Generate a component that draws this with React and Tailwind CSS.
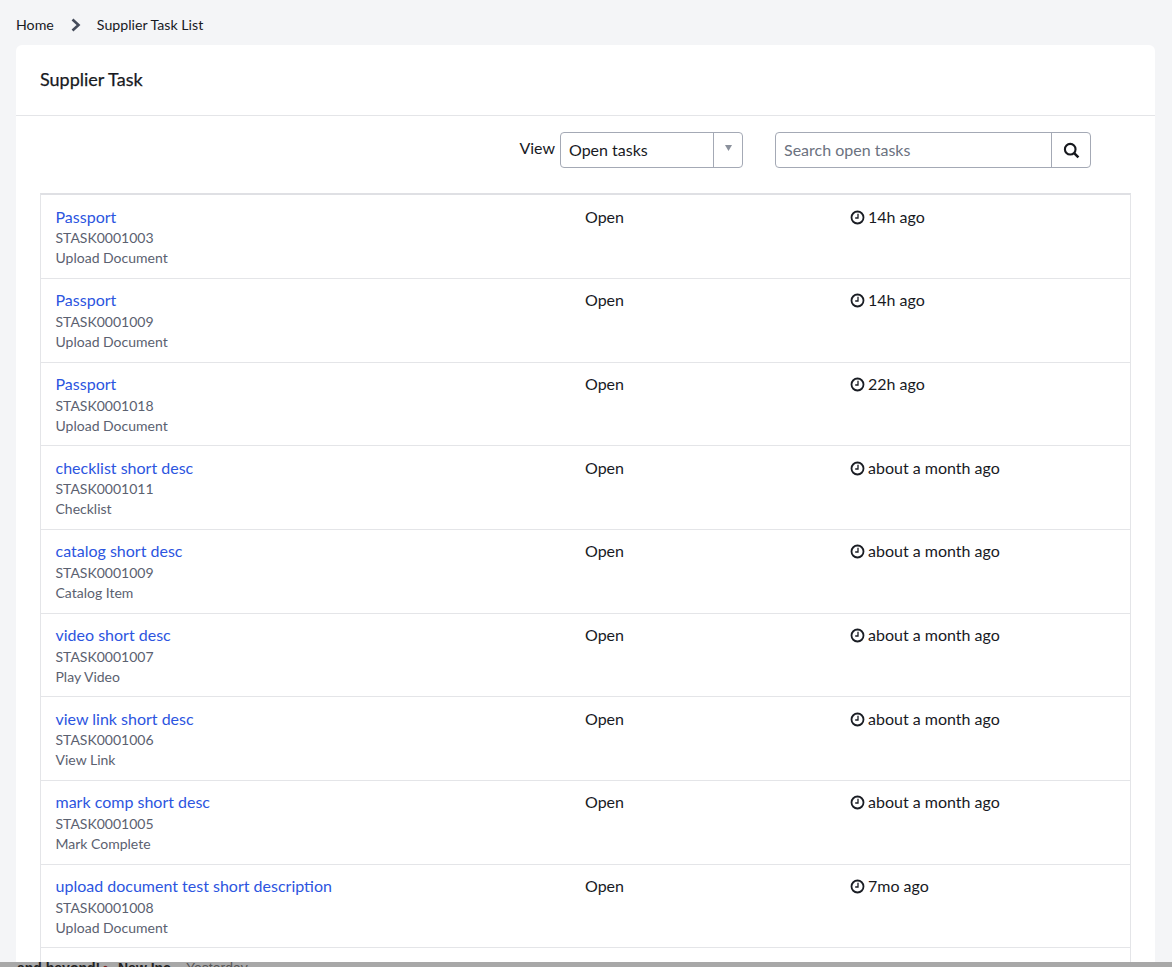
import React from "react";

const rows = [
  ["Passport", "STASK0001003", "Upload Document", "14h ago"],
  ["Passport", "STASK0001009", "Upload Document", "14h ago"],
  ["Passport", "STASK0001018", "Upload Document", "22h ago"],
  ["checklist short desc", "STASK0001011", "Checklist", "about a month ago"],
  ["catalog short desc", "STASK0001009", "Catalog Item", "about a month ago"],
  ["video short desc", "STASK0001007", "Play Video", "about a month ago"],
  ["view link short desc", "STASK0001006", "View Link", "about a month ago"],
  ["mark comp short desc", "STASK0001005", "Mark Complete", "about a month ago"],
  ["upload document test short description", "STASK0001008", "Upload Document", "7mo ago"],
];

function Clock() {
  return (
    <svg width="15" height="15" viewBox="0 0 15 15" fill="none" stroke="#1a1d24" className="shrink-0 mt-[1px]">
      <circle cx="7.5" cy="7.5" r="6" strokeWidth="1.8" />
      <path d="M8 3.8V8H5.2" strokeWidth="1.3" />
    </svg>
  );
}

export default function App() {
  return (
    <div className="h-[967px] overflow-hidden bg-[#f4f5f7] text-[#181a1f] font-['Lato','Liberation_Sans',sans-serif] relative">
      <nav className="h-[45px] pl-4 pt-[5px] flex items-center text-[14.2px]">
        <span>Home</span>
        <svg width="12" height="14" viewBox="0 0 12 14" fill="none" stroke="#444b5a" strokeWidth="2.6" className="ml-[16px] mr-[15px]">
          <path d="M2.5 1.5L8.5 7L2.5 12.5" />
        </svg>
        <span>Supplier Task List</span>
      </nav>
      <main className="ml-4 mr-[17px] bg-white rounded-t-md h-[922px]">
        <header className="h-[71px] pl-6 flex items-center border-b border-[#e4e5e8]">
          <h1 className="text-lg font-normal pb-[2px] [-webkit-text-stroke:0.25px_#181a1f]">Supplier Task</h1>
        </header>
        <div className="h-[77.4px] flex items-start pt-4 pr-[64px] justify-end">
          <label className="text-base leading-[32px] mr-[5px]">View</label>
          <div className="w-[183px] h-[36px] border border-[#a4a9b5] rounded flex items-center">
            <span className="flex-1 pl-2 text-base">Open tasks</span>
            <span className="w-[29px] h-full border-l border-[#a4a9b5] flex items-center justify-center pb-1">
              <svg width="7" height="6" viewBox="0 0 7 6" fill="#8b919c"><path d="M0 0H7L3.5 6Z" /></svg>
            </span>
          </div>
          <div className="w-[316px] h-[36px] ml-8 border border-[#a4a9b5] rounded flex items-center">
            <span className="flex-1 pl-2 text-base text-[#6b7280]">Search open tasks</span>
            <span className="w-[39px] h-full border-l border-[#a4a9b5] flex items-center justify-center">
              <svg width="17" height="17" viewBox="0 0 16 16" fill="none" stroke="#16181d">
                <circle cx="6.8" cy="6.8" r="5" strokeWidth="2" />
                <path d="M10.5 10.5L14.5 14.5" strokeWidth="2.4" />
              </svg>
            </span>
          </div>
        </div>
        <section className="mx-6 h-[780px] border-x border-[#e4e5e8] border-t-2 border-t-[#dfe0e4]">
          {rows.map((r, i) => (
            <div key={i} className="h-[83.67px] border-b border-[#e4e5e8] grid grid-cols-[529.5px_265px_1fr] pl-[14.5px] pt-[10.2px]">
              <div>
                <a className="block text-base leading-[22.8px] text-[#2c55e0]">{r[0]}</a>
                <div className="text-sm leading-[20px] text-[#5b6170]">{r[1]}</div>
                <div className="text-sm leading-[20px] text-[#5b6170]">{r[2]}</div>
              </div>
              <div className="text-base leading-[22px]">Open</div>
              <div className="text-base leading-[22px] flex items-center h-[22px] gap-[3px]">
                <Clock />
                <span>{r[3]}</span>
              </div>
            </div>
          ))}
        </section>
      </main>
      <footer className="absolute left-0 right-0 bottom-0 h-[5px] overflow-hidden bg-[#a8a8a8] flex items-start font-['Liberation_Sans',sans-serif] text-sm font-bold leading-[12px] text-[#222]">
        <span className="ml-[17px] w-[86px] shrink-0">and beyond!</span>
        <span className="w-[15px] shrink-0 text-[#7a2020]">•</span>
        <span className="w-[68px] shrink-0">New Inc</span>
        <span className="font-normal text-[#555]">Yesterday</span>
      </footer>
    </div>
  );
}
